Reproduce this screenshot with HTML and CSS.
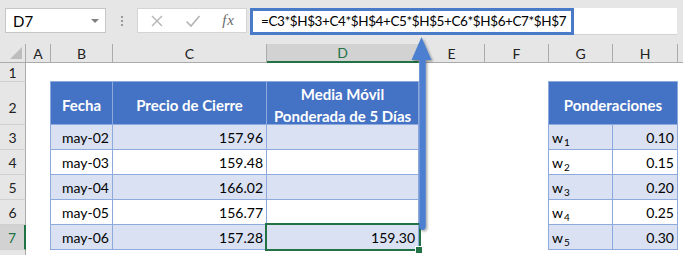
FILE: index.html
```html
<!DOCTYPE html>
<html lang="es">
<head>
    <meta charset="UTF-8">
    <meta name="viewport" content="width=device-width, initial-scale=1.0">
    <title>Media Móvil Ponderada</title>
    <link rel="stylesheet" href="styles.css">
</head>
<body>

    <div class="app">
        <!-- barra de fórmulas -->
        <div class="toolbar">
            <div class="namebox">
                <span>D7</span>
                <span class="caret"></span>
            </div>
            <div class="grip"><i></i><i></i><i></i></div>
            <div class="fnbox">
                <svg class="ico" width="14" height="14" viewBox="0 0 14 14"><path d="M2 2 L12 12 M12 2 L2 12" stroke="#b4b4b4" stroke-width="1.4" fill="none"/></svg>
                <svg class="ico" width="16" height="14" viewBox="0 0 16 14"><path d="M1.5 7.5 L6 12 L14.5 2" stroke="#b4b4b4" stroke-width="1.6" fill="none"/></svg>
                <span class="fx">fx</span>
            </div>
            <div class="formula">
                <div class="formula-hl">=C3*$H$3+C4*$H$4+C5*$H$5+C6*$H$6+C7*$H$7</div>
            </div>
        </div>

        <!-- hoja -->
        <div class="sheet">
            <div class="ch corner"></div>
            <div class="ch">A</div>
            <div class="ch">B</div>
            <div class="ch">C</div>
            <div class="ch sel">D</div>
            <div class="ch">E</div>
            <div class="ch">F</div>
            <div class="ch">G</div>
            <div class="ch">H</div>
            <div class="ch last"></div>

            <div class="rh">1</div>
            <div class="c"></div><div class="c"></div><div class="c"></div><div class="c"></div>
            <div class="c"></div><div class="c"></div><div class="c"></div><div class="c"></div><div class="c"></div>

            <div class="rh r2">2</div>
            <div class="c"></div>
            <div class="t th first top"><span>Fecha</span></div>
            <div class="t th top"><span>Precio de Cierre</span></div>
            <div class="t th top"><span>Media Móvil<br>Ponderada de 5 Días</span></div>
            <div class="c"></div><div class="c"></div>
            <div class="t th first top span2"><span>Ponderaciones</span></div>
            <div class="c"></div>

            <div class="rh">3</div>
            <div class="c"></div>
            <div class="t band first num">may-02</div>
            <div class="t band num">157.96</div>
            <div class="t band num"></div>
            <div class="c"></div><div class="c"></div>
            <div class="t band first lab"><span>w<sub>1</sub></span></div>
            <div class="t band num">0.10</div>
            <div class="c"></div>

            <div class="rh">4</div>
            <div class="c"></div>
            <div class="t first num">may-03</div>
            <div class="t num">159.48</div>
            <div class="t num"></div>
            <div class="c"></div><div class="c"></div>
            <div class="t first lab"><span>w<sub>2</sub></span></div>
            <div class="t num">0.15</div>
            <div class="c"></div>

            <div class="rh">5</div>
            <div class="c"></div>
            <div class="t band first num">may-04</div>
            <div class="t band num">166.02</div>
            <div class="t band num"></div>
            <div class="c"></div><div class="c"></div>
            <div class="t band first lab"><span>w<sub>3</sub></span></div>
            <div class="t band num">0.20</div>
            <div class="c"></div>

            <div class="rh">6</div>
            <div class="c"></div>
            <div class="t first num">may-05</div>
            <div class="t num">156.77</div>
            <div class="t num"></div>
            <div class="c"></div><div class="c"></div>
            <div class="t first lab"><span>w<sub>4</sub></span></div>
            <div class="t num">0.25</div>
            <div class="c"></div>

            <div class="rh sel">7</div>
            <div class="c"></div>
            <div class="t band first num">may-06</div>
            <div class="t band num">157.28</div>
            <div class="t band num active">159.30</div>
            <div class="c"></div><div class="c"></div>
            <div class="t band first lab"><span>w<sub>5</sub></span></div>
            <div class="t band num">0.30</div>
            <div class="c"></div>

            <div class="rh"></div>
            <div class="c"></div>
            <div class="c"></div><div class="c"></div><div class="c"></div><div class="c"></div>
            <div class="c"></div><div class="c"></div><div class="c"></div><div class="c"></div>
        </div>

        <!-- flecha -->
        <svg class="arrow" width="30" height="200" viewBox="0 0 30 200">
            <defs>
                <filter id="sh" x="-50%" y="-10%" width="200%" height="120%">
                    <feDropShadow dx="1.5" dy="1.5" stdDeviation="1.2" flood-color="#000" flood-opacity="0.35"/>
                </filter>
            </defs>
            <g filter="url(#sh)">
                <path d="M15.5 1 L25.5 24 L19.8 24 L19.8 190 Q19.8 194 16.5 194 Q13.2 194 13.2 190 L13.2 24 L5.5 24 Z" fill="#4d7fd0"/>
            </g>
        </svg>
    </div>

</body>
</html>
```

FILE: styles.css
```css
* {
    margin: 0;
    padding: 0;
    box-sizing: border-box;
}

body {
    background-color: #ffffff;
    font-family: "Lato", "Open Sans", sans-serif;
    font-size: 14px;
    color: #000;
    overflow: hidden;
}

.app {
    position: relative;
    width: 683px;
    height: 255px;
    overflow: hidden;
}

/* barra superior */
.toolbar {
    display: flex;
    align-items: flex-start;
    height: 44px;
    padding: 8px 0 0 5px;
    background-color: #e6e6e6;
}

.namebox {
    display: flex;
    align-items: center;
    justify-content: space-between;
    width: 101px;
    height: 25px;
    padding: 0 6px 0 7px;
    background-color: #fff;
    border: 1px solid #c6c6c6;
    font-size: 15px;
}

.caret {
    width: 0;
    height: 0;
    border-left: 4px solid transparent;
    border-right: 4px solid transparent;
    border-top: 4px solid #808080;
}

.grip {
    display: flex;
    flex-direction: column;
    align-items: center;
    justify-content: center;
    gap: 2px;
    width: 31px;
    height: 25px;
}

.grip i {
    display: block;
    width: 2px;
    height: 2px;
    background-color: #9a9a9a;
}

.fnbox {
    display: flex;
    align-items: center;
    justify-content: space-between;
    width: 110px;
    height: 25px;
    padding: 0 11px 0 12px;
    background-color: #fff;
    border: 1px solid #d4d4d4;
}

.fx {
    font-family: "Liberation Serif", serif;
    font-style: italic;
    font-size: 15px;
    color: #6a6a6a;
    letter-spacing: 1px;
}

.formula {
    width: 427px;
    height: 27px;
    margin-left: 3px;
    background-color: #fff;
    border-bottom: 1px solid #d4d4d4;
}

.formula-hl {
    width: 324px;
    height: 27px;
    padding-left: 8px;
    border: 3px solid #4a7bc8;
    font-size: 13.5px;
    letter-spacing: -0.4px;
    line-height: 21px;
    white-space: nowrap;
}

/* hoja */
.sheet {
    display: grid;
    grid-template-columns: 26px 25px 62px 154px 152px 66px 64px 64px 65px 1fr;
    grid-template-rows: 19px 19px 43px 25px 25px 25px 25px 25px 25px;
}

.ch {
    display: flex;
    align-items: center;
    justify-content: center;
    background-color: #e6e6e6;
    border-right: 1px solid #ababab;
    border-bottom: 1px solid #ababab;
    font-size: 14px;
    color: #222;
}

.ch.last {
    border-right: none;
}

.ch.corner {
    position: relative;
}

.ch.corner::after {
    content: "";
    position: absolute;
    right: 3px;
    bottom: 3px;
    width: 0;
    height: 0;
    border-left: 12px solid transparent;
    border-bottom: 12px solid #bdbdbd;
}

.ch.sel {
    background-color: #d2d2d2;
    color: #217346;
    border-bottom: 2px solid #217346;
}

.rh {
    display: flex;
    align-items: center;
    justify-content: center;
    background-color: #e6e6e6;
    border-right: 1px solid #ababab;
    border-bottom: 1px solid #d0d0d0;
    font-size: 14px;
    color: #222;
}

.rh.r2 {
    padding-top: 8px;
}

.rh.sel {
    background-color: #d2d2d2;
    color: #217346;
    border-right: 2px solid #217346;
}

.c {
    background-color: #fff;
}

/* tablas */
.t {
    display: flex;
    align-items: center;
    border-right: 1px solid #8ea9db;
    border-bottom: 1px solid #8ea9db;
    background-color: #fff;
    padding: 0 3px;
}

.t.first {
    box-shadow: -1px 0 0 #8ea9db;
}

.t.top {
    box-shadow: 0 -1px 0 #8ea9db;
}

.t.first.top {
    box-shadow: -1px 0 0 #8ea9db, 0 -1px 0 #8ea9db, -1px -1px 0 #8ea9db;
}

.th {
    justify-content: center;
    text-align: center;
    padding-top: 3px;
    background-color: #4472c4;
    color: #fff;
    font-size: 15px;
    font-weight: bold;
    line-height: 22px;
}

.span2 {
    grid-column: span 2;
}

.band {
    background-color: #d9e1f2;
}

.num {
    justify-content: flex-end;
}

.lab {
    justify-content: flex-start;
    padding-top: 2px;
}

.lab sub {
    font-size: 10px;
    vertical-align: -3px;
    margin-left: 1px;
}

.active {
    position: relative;
}

.active::before {
    content: "";
    position: absolute;
    top: -2px;
    left: -2px;
    right: -3px;
    bottom: -2px;
    border: 2px solid #217346;
}

.active::after {
    content: "";
    position: absolute;
    right: -5px;
    bottom: -5px;
    width: 6px;
    height: 6px;
    background-color: #217346;
    border: 1px solid #fff;
}

.arrow {
    position: absolute;
    left: 406px;
    top: 36px;
}
```
